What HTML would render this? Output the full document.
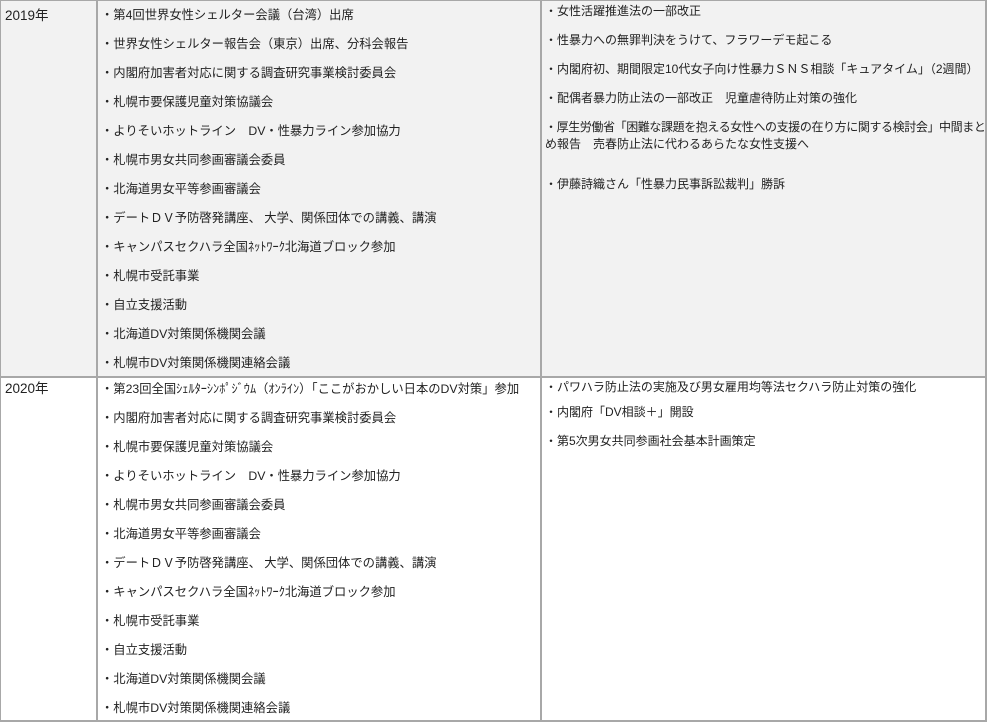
<!DOCTYPE html>
<html><head><meta charset="utf-8"><style>
body{margin:0;width:989px;height:722px;background:#fff;position:relative;overflow:hidden;font-family:"Liberation Sans","Noto Sans CJK JP",sans-serif;font-size:12.3px;color:#222}
.bg{position:absolute;left:1px;top:1px;width:984px;height:375px;background:#f2f2f2}
.v,.h{position:absolute;background:#a8a8a8}
.t{position:absolute;line-height:16px;white-space:nowrap}
.r{font-size:12px}
.y{font-size:13.5px}
</style></head><body>
<div class="bg"></div>
<div class="h" style="left:0;top:0;width:987px;height:1px"></div>
<div class="h" style="left:0;top:376px;width:987px;height:2px"></div>
<div class="h" style="left:0;top:720px;width:987px;height:2px"></div>
<div class="v" style="left:0;top:0;width:1px;height:722px"></div>
<div class="v" style="left:96px;top:0;width:2px;height:722px"></div>
<div class="v" style="left:540px;top:0;width:2px;height:722px"></div>
<div class="v" style="left:985px;top:0;width:2px;height:722px"></div>

<div class="t y" style="left:5px;top:8px">2019年</div>
<div class="t" style="left:101px;top:7px">・第4回世界女性シェルター会議（台湾）出席</div>
<div class="t" style="left:101px;top:36px">・世界女性シェルター報告会（東京）出席、分科会報告</div>
<div class="t" style="left:101px;top:65px">・内閣府加害者対応に関する調査研究事業検討委員会</div>
<div class="t" style="left:101px;top:94px">・札幌市要保護児童対策協議会</div>
<div class="t" style="left:101px;top:123px">・よりそいホットライン　DV・性暴力ライン参加協力</div>
<div class="t" style="left:101px;top:152px">・札幌市男女共同参画審議会委員</div>
<div class="t" style="left:101px;top:181px">・北海道男女平等参画審議会</div>
<div class="t" style="left:101px;top:210px">・デートＤＶ予防啓発講座、 大学、関係団体での講義、講演</div>
<div class="t" style="left:101px;top:239px">・キャンパスセクハラ全国ﾈｯﾄﾜｰｸ北海道ブロック参加</div>
<div class="t" style="left:101px;top:268px">・札幌市受託事業</div>
<div class="t" style="left:101px;top:297px">・自立支援活動</div>
<div class="t" style="left:101px;top:326px">・北海道DV対策関係機関会議</div>
<div class="t" style="left:101px;top:355px">・札幌市DV対策関係機関連絡会議</div>

<div class="t r" style="left:545px;top:3px">・女性活躍推進法の一部改正</div>
<div class="t r" style="left:545px;top:32px">・性暴力への無罪判決をうけて、フラワーデモ起こる</div>
<div class="t r" style="left:545px;top:61px">・内閣府初、期間限定10代女子向け性暴力ＳＮＳ相談「キュアタイム」（2週間）</div>
<div class="t r" style="left:545px;top:90px">・配偶者暴力防止法の一部改正　児童虐待防止対策の強化</div>
<div class="t r" style="left:545px;top:119px;letter-spacing:-0.4px">・厚生労働省「困難な課題を抱える女性への支援の在り方に関する検討会」中間まと</div>
<div class="t r" style="left:545px;top:136px">め報告　売春防止法に代わるあらたな女性支援へ</div>
<div class="t r" style="left:545px;top:176px">・伊藤詩織さん「性暴力民事訴訟裁判」勝訴</div>

<div class="t y" style="left:5px;top:381px">2020年</div>
<div class="t" style="left:101px;top:381px">・第23回全国ｼｪﾙﾀｰｼﾝﾎﾟｼﾞｳﾑ（ｵﾝﾗｲﾝ）「ここがおかしい日本のDV対策」参加</div>
<div class="t" style="left:101px;top:410px">・内閣府加害者対応に関する調査研究事業検討委員会</div>
<div class="t" style="left:101px;top:439px">・札幌市要保護児童対策協議会</div>
<div class="t" style="left:101px;top:468px">・よりそいホットライン　DV・性暴力ライン参加協力</div>
<div class="t" style="left:101px;top:497px">・札幌市男女共同参画審議会委員</div>
<div class="t" style="left:101px;top:526px">・北海道男女平等参画審議会</div>
<div class="t" style="left:101px;top:555px">・デートＤＶ予防啓発講座、 大学、関係団体での講義、講演</div>
<div class="t" style="left:101px;top:584px">・キャンパスセクハラ全国ﾈｯﾄﾜｰｸ北海道ブロック参加</div>
<div class="t" style="left:101px;top:613px">・札幌市受託事業</div>
<div class="t" style="left:101px;top:642px">・自立支援活動</div>
<div class="t" style="left:101px;top:671px">・北海道DV対策関係機関会議</div>
<div class="t" style="left:101px;top:700px">・札幌市DV対策関係機関連絡会議</div>

<div class="t r" style="left:545px;top:379px">・パワハラ防止法の実施及び男女雇用均等法セクハラ防止対策の強化</div>
<div class="t r" style="left:545px;top:404px">・内閣府「DV相談＋」開設</div>
<div class="t r" style="left:545px;top:433px">・第5次男女共同参画社会基本計画策定</div>
</body></html>
